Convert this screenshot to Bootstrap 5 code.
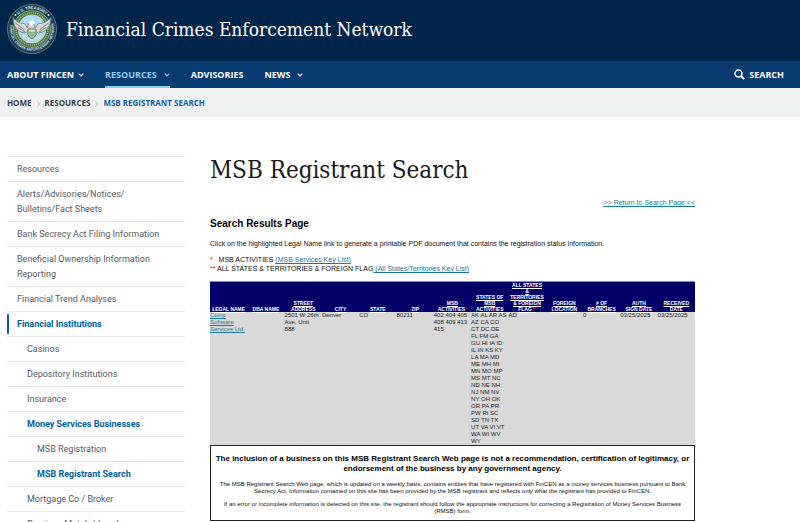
<!DOCTYPE html>
<html lang="en">
<head>
<meta charset="utf-8">
<meta name="viewport" content="width=device-width, initial-scale=1">
<title>MSB Registrant Search | FinCEN</title>
<link href="https://cdn.jsdelivr.net/npm/bootstrap@5.3.0/dist/css/bootstrap.min.css" rel="stylesheet">
<style>
  body { font-family: "Liberation Sans", Arial, sans-serif; font-size: 7px; line-height: 9px; color: #111; background: #fff; }
  .gutter { padding-left: 7px; padding-right: 7px; }
  .site-head { background: #00264c; padding-top: 4px; padding-bottom: 7px; gap: 9px; }
  .seal { width: 50px; height: 50px; flex: none; }
  .site-title { font-family: "DejaVu Serif Condensed", "DejaVu Serif", serif; font-size: 19px; line-height: 28px; color: #fff; }
  .main-nav { background: #083b71; font: 700 9px/27px "Open Sans", sans-serif; padding-right: 16px; }
  .main-nav .nav { gap: 21px; }
  .main-nav a, .search-btn { color: #fff; text-decoration: none; gap: 4px; }
  .main-nav a.current { color: #8bd0ee; box-shadow: inset 0 -2px #8bd0ee; }
  .main-nav li:nth-child(2) a, .main-nav li:nth-child(4) a { gap: 7px; }
  .chev { width: 6px; height: 4px; }
  .search-btn { font: inherit; background: none; border: 0; padding: 0; }
  .search-btn svg { width: 11px; height: 11px; }
  .crumbs { background: #f0f2f2; font: 700 8px/29px "Open Sans", sans-serif; }
  .crumbs ol { gap: 5px; }
  .crumbs a { color: #3a4350; text-decoration: none; }
  .crumbs .here { color: #1560ab; }
  .crumbs svg { width: 3px; height: 6px; }
  .page-grid { display: grid; grid-template-columns: 178fr 485fr 73fr; column-gap: 25px; padding-top: 39px; }
  .side { font: 400 9px/15px Roboto, sans-serif; }
  .side li { border-top: 1px solid #e6e8ea; }
  .side a { display: block; color: #565c65; text-decoration: none; padding: 5px 10px 4px; }
  .side .lv2 { padding-left: 20px; }
  .side .lv3 { padding-left: 30px; }
  .side .on { color: #005ea2; font-weight: 700; }
  .side .bar { position: relative; }
  .side .bar::before { content: ""; position: absolute; left: 0; top: 2px; bottom: 2px; width: 2px; border-radius: 2px; background: #005ea2; }
  h1 { font-family: "DejaVu Serif Condensed", "DejaVu Serif", serif; font-size: 24px; line-height: 32px; color: #1b1b1b; font-weight: 400; margin: -2px 0 12px; }
  h2 { font-size: 10px; line-height: 12px; font-weight: 700; margin: 11px 0 9px; color: #000; }
  .intro { margin-bottom: 7px; }
  .results-area a { color: #19789f; }
  .star { color: #e00; }
  .results { table-layout: fixed; width: 100%; font-size: 6px; line-height: 7px; color: #222; border-top: 1px solid #8b8ba8; }
  .results th { background: #000066; font-size: 5px; line-height: 6px; padding: 0; text-align: center; vertical-align: bottom; }
  .results th a { color: #fff; }
  .results td { background: #d9d9d9; padding: 0; vertical-align: top; white-space: nowrap; }
  .notice { border: 1px solid #222; text-align: center; font-size: 6px; line-height: 7px; padding: 8px 2px 5px; }
  .notice h3 { font-size: 8px; line-height: 10px; font-weight: 700; margin: 0 0 7px; color: #000; }
  .notice p { margin: 0 0 6px; }
</style>
</head>
<body>
<header>
  <div class="site-head gutter d-flex align-items-center">
    <svg class="seal" viewBox="0 0 100 100" role="img" aria-label="FinCEN seal">
      <defs>
        <path id="arcTop" d="M10 50a40 40 0 0 1 80 0"/>
        <path id="arcBottom" d="M7 40a44 44 0 1 0 86 0"/>
      </defs>
      <circle cx="50" cy="50" r="49" fill="#1c3c5c" stroke="#5d7f60" stroke-width="2"/>
      <circle cx="50" cy="50" r="37" fill="#4b7842" stroke="#9fb78f" stroke-width="1.500"/>
      <circle cx="50" cy="50" r="32" fill="none" stroke="#a9bd92" stroke-width="3" stroke-dasharray="2 2"/>
      <circle cx="50" cy="50" r="28" fill="#a9d5ee" stroke="#dce9e5"/>
      <path d="M30 38q20-15 40 0M27 52h46M31 65q19 10 38 0M50 24v52M38 27q-12 23 0 46M62 27q12 23 0 46" fill="none" stroke="#d8edf6"/>
      <g font-family="Liberation Sans, sans-serif" font-weight="700" fill="#dce5ec" text-anchor="middle">
        <text font-size="8"><textPath href="#arcTop" startOffset="50%">U.S. TREASURY</textPath></text>
        <text font-size="7"><textPath href="#arcBottom" startOffset="50%">FINANCIAL CRIMES ENFORCEMENT NETWORK</textPath></text>
      </g>
      <circle cx="17" cy="22" r="2" fill="#e8edf0"/><circle cx="83" cy="22" r="2" fill="#e8edf0"/>
      <path d="M12 27c6 8 13 12 23 12l6 9 2-8 4-4 6 3 3 9 7-9c10 0 18-4 25-12-1 18-9 29-25 31l-9-4-5 7-6-7-8 4C20 55 13 45 12 27z" fill="#d5d8d6" stroke="#6e7778" stroke-width="1.500"/>
      <path d="M17 38l18 14M22 47l14 9M83 38 65 52M78 47 64 56" stroke="#7b8586" stroke-width="2"/>
      <path d="M43 38l4-5 6 1 3 5-7 4z" fill="#fff"/><path d="M43 38l-4 2 5 1z" fill="#d8a93b"/>
      <path d="M42 50h16v11q-2 6-8 9-6-3-8-9z" fill="#e8ead8" stroke="#4b7842" stroke-width="2"/>
      <path d="M46 55v10M50 55v13M54 55v10" stroke="#4b7842" stroke-width="2"/>
      <path d="M39 63l-7 7M61 63l7 7M44 70l-3 6h18l-3-6" stroke="#d5d8d6" stroke-width="3" fill="none"/>
    </svg>
    <div class="site-title">Financial Crimes Enforcement Network</div>
  </div>
  <nav class="main-nav gutter d-flex justify-content-between" aria-label="Main">
    <ul class="nav">
      <li><a class="d-flex align-items-center" href="#">ABOUT FINCEN <svg class="chev" viewBox="0 0 6 4"><path d="M.7.7 3 3 5.300.7" fill="none" stroke="currentColor" stroke-width="1.200"/></svg></a></li>
      <li><a class="current d-flex align-items-center" href="#">RESOURCES <svg class="chev" viewBox="0 0 6 4"><path d="M.7.7 3 3 5.300.7" fill="none" stroke="currentColor" stroke-width="1.200"/></svg></a></li>
      <li><a href="#">ADVISORIES</a></li>
      <li><a class="d-flex align-items-center" href="#">NEWS <svg class="chev" viewBox="0 0 6 4"><path d="M.7.7 3 3 5.300.7" fill="none" stroke="currentColor" stroke-width="1.200"/></svg></a></li>
    </ul>
    <button class="search-btn d-flex align-items-center" type="button"><svg viewBox="0 0 11 11"><circle cx="4.500" cy="4.500" r="3.500" fill="none" stroke="currentColor" stroke-width="1.500"/><path d="M7 7l3.200 3.200" stroke="currentColor" stroke-width="1.900"/></svg>SEARCH</button>
  </nav>
</header>
<nav class="crumbs gutter" aria-label="Breadcrumb">
  <ol class="list-unstyled d-flex mb-0">
    <li><a href="#">HOME</a></li>
    <li><svg viewBox="0 0 3 6"><path d="M.4.4 2.600 3 .4 5.600" fill="none" stroke="#a4a8ac" stroke-width=".7"/></svg></li>
    <li><a href="#">RESOURCES</a></li>
    <li><svg viewBox="0 0 3 6"><path d="M.4.4 2.600 3 .4 5.600" fill="none" stroke="#a4a8ac" stroke-width=".7"/></svg></li>
    <li><a class="here" href="#" aria-current="page">MSB REGISTRANT SEARCH</a></li>
  </ol>
</nav>
<div class="page-grid gutter">
  <nav class="side" aria-label="Section">
    <ul class="list-unstyled mb-0">
      <li><a href="#">Resources</a></li>
      <li><a href="#">Alerts/Advisories/Notices/<br>Bulletins/Fact Sheets</a></li>
      <li><a href="#">Bank Secrecy Act Filing Information</a></li>
      <li><a href="#">Beneficial Ownership Information<br>Reporting</a></li>
      <li><a href="#">Financial Trend Analyses</a></li>
      <li><a class="on bar" href="#">Financial Institutions</a></li>
      <li><a class="lv2" href="#">Casinos</a></li>
      <li><a class="lv2" href="#">Depository Institutions</a></li>
      <li><a class="lv2" href="#">Insurance</a></li>
      <li><a class="lv2 on" href="#">Money Services Businesses</a></li>
      <li><a class="lv3" href="#">MSB Registration</a></li>
      <li><a class="lv3 on" href="#">MSB Registrant Search</a></li>
      <li><a class="lv2" href="#">Mortgage Co / Broker</a></li>
      <li><a class="lv2" href="#">Precious Metals/Jewelry</a></li>
    </ul>
  </nav>
  <main class="results-area">
    <h1>MSB Registrant Search</h1>
    <div class="text-end"><a href="#">&gt;&gt; Return to Search Page &lt;&lt;</a></div>
    <h2>Search Results Page</h2>
    <p class="intro">Click on the highlighted Legal Name link to generate a printable PDF document that contains the registration status information.</p>
    <div><span class="star">*</span>&nbsp;&nbsp; MSB ACTIVITIES <a href="#">(MSB Services Key List)</a></div>
    <div class="mb-2"><span class="star">**</span> ALL STATES &amp; TERRITORIES &amp; FOREIGN FLAG<a href="#"> (All States/Territories Key List)</a></div>
    <table class="results">
      <thead>
        <tr>
          <th><a href="#">LEGAL NAME</a></th><th><a href="#">DBA NAME</a></th><th><a href="#">STREET ADDRESS</a></th><th><a href="#">CITY</a></th><th><a href="#">STATE</a></th><th><a href="#">ZIP</a></th>
          <th><a href="#">MSB<br>ACTIVITIES<span class="star">*</span></a></th><th><a href="#">STATES OF<br>MSB<br>ACTIVITIES</a></th><th><a href="#">ALL STATES<br>&amp;<br>TERRITORIES<br>&amp; FOREIGN<br>FLAG<span class="star">**</span></a></th>
          <th><a href="#">FOREIGN LOCATION</a></th><th><a href="#"># OF<br>BRANCHES</a></th><th><a href="#">AUTH<br>SIGN DATE</a></th><th><a href="#">RECEIVED DATE</a></th>
        </tr>
      </thead>
      <tbody>
        <tr>
          <td><a href="#">Coinp<br>Software<br>Services Ltd.</a></td><td></td><td>2501 W 26th<br>Ave, Unit<br>888</td><td>Denver</td><td>CO</td><td>80211</td>
          <td>402 404 405<br>408 409 413<br>415</td>
          <td>AK AL AR AS<br>AZ CA CO<br>CT DC DE<br>FL FM GA<br>GU HI IA ID<br>IL IN KS KY<br>LA MA MD<br>ME MH MI<br>MN MO MP<br>MS MT NC<br>ND NE NH<br>NJ NM NV<br>NY OH OK<br>OR PA PR<br>PW RI SC<br>SD TN TX<br>UT VA VI VT<br>WA WI WV<br>WY</td>
          <td>AD</td><td></td><td>0</td><td>03/25/2025</td><td>03/25/2025</td>
        </tr>
      </tbody>
    </table>
    <section class="notice">
      <h3>The inclusion of a business on this MSB Registrant Search Web page is not a recommendation, certification of legitimacy, or endorsement of the business by any government agency.</h3>
      <p>The MSB Registrant Search Web page, which is updated on a weekly basis, contains entities that have registered with FinCEN as a money services business pursuant to Bank Secrecy Act. Information contained on this site has been provided by the MSB registrant and reflects only what the registrant has provided to FinCEN.</p>
      <p class="mb-0">If an error or incomplete information is detected on this site, the registrant should follow the appropriate instructions for correcting a Registration of Money Services Business (RMSB) form.</p>
    </section>
  </main>
</div>
<script src="https://cdn.jsdelivr.net/npm/bootstrap@5.3.0/dist/js/bootstrap.bundle.min.js"></script>
</body>
</html>
